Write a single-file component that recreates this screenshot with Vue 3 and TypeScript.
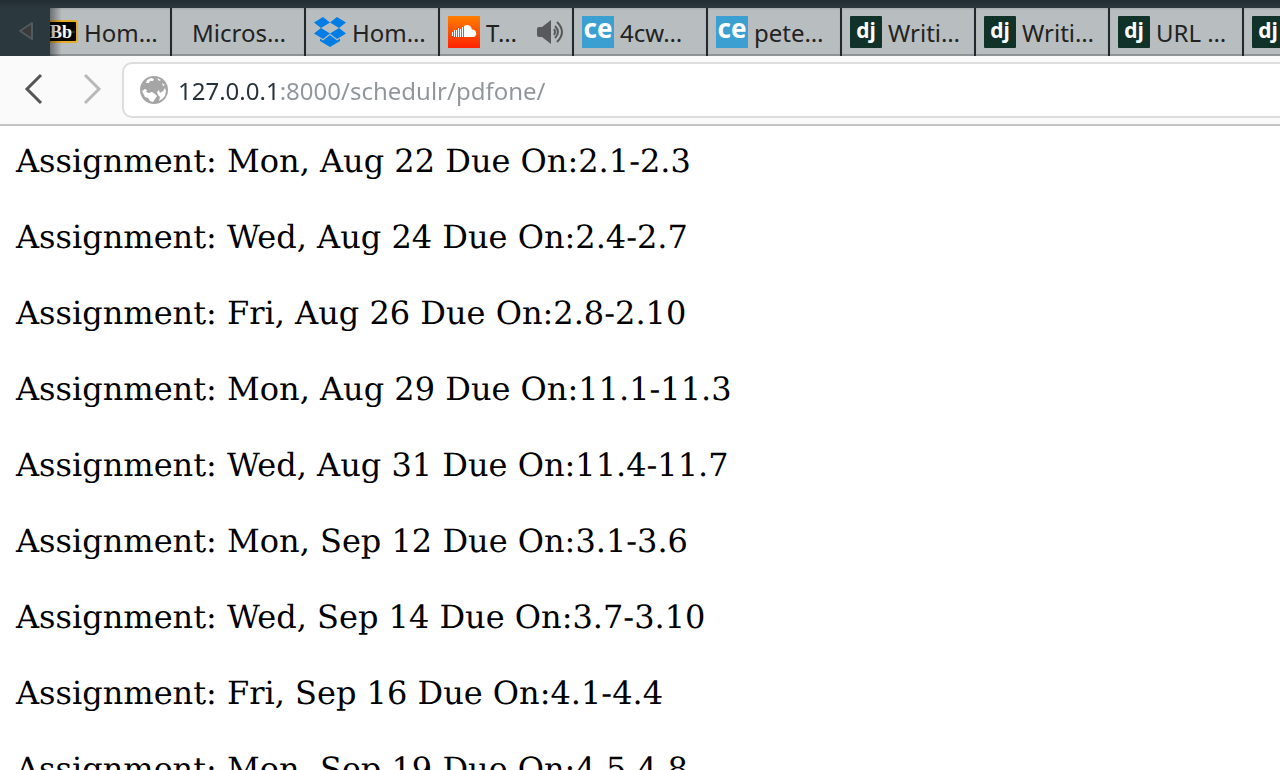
<script setup lang="ts">
import { ref } from 'vue'

type Icon = 'blackboard' | 'none' | 'dropbox' | 'soundcloud' | 'ce' | 'django'

interface Tab {
  id: number
  icon: Icon
  title: string
  audible?: boolean
}

const tabs: Tab[] = [
  { id: 1, icon: 'blackboard', title: 'Hom…' },
  { id: 2, icon: 'none', title: 'Micros…' },
  { id: 3, icon: 'dropbox', title: 'Hom…' },
  { id: 4, icon: 'soundcloud', title: 'T…', audible: true },
  { id: 5, icon: 'ce', title: '4cw…' },
  { id: 6, icon: 'ce', title: 'pete…' },
  { id: 7, icon: 'django', title: 'Writi…' },
  { id: 8, icon: 'django', title: 'Writi…' },
  { id: 9, icon: 'django', title: 'URL …' },
  { id: 10, icon: 'django', title: '' },
]

const address = ref('127.0.0.1:8000/schedulr/pdfone/')

const assignments = [
  { day: 'Mon, Aug 22', sections: '2.1-2.3' },
  { day: 'Wed, Aug 24', sections: '2.4-2.7' },
  { day: 'Fri, Aug 26', sections: '2.8-2.10' },
  { day: 'Mon, Aug 29', sections: '11.1-11.3' },
  { day: 'Wed, Aug 31', sections: '11.4-11.7' },
  { day: 'Mon, Sep 12', sections: '3.1-3.6' },
  { day: 'Wed, Sep 14', sections: '3.7-3.10' },
  { day: 'Fri, Sep 16', sections: '4.1-4.4' },
  { day: 'Mon, Sep 19', sections: '4.5-4.8' },
]
</script>

<template>
  <div class="browser">
    <nav class="tabstrip" aria-label="Tabs">
      <button class="scroll" type="button" aria-label="Scroll tabs left">
        <svg width="20" height="24" viewBox="0 0 20 24">
          <path d="M16 4V20L4 12Z" fill="#3a3a3a" stroke="#505a5f" stroke-width="2" stroke-linejoin="round" />
        </svg>
      </button>
      <div class="tabs">
        <button v-for="tab in tabs" :key="tab.id" type="button" class="tab" :class="{ plain: tab.icon === 'none' }">
          <svg v-if="tab.icon === 'blackboard'" class="icon" viewBox="0 0 32 32">
            <rect x="1" y="5" width="30" height="21" rx="2" fill="#050505" stroke="#e5ac27" stroke-width="2" />
            <path d="M3 16H29" stroke="#555" />
            <text x="15" y="22" text-anchor="middle" class="bb">Bb</text>
          </svg>
          <svg v-else-if="tab.icon === 'dropbox'" class="icon" viewBox="0 0 32 32" fill="#007ee5">
            <path d="M9 1L16 6.500L7 12L0 6.500ZM23 1L32 6.500L25 12L16 6.500ZM7 12L16 17.500L9 23L0 17.500ZM25 12L32 17.500L23 23L16 17.500ZM16 19L23 24.500L26 22.500V25L16 31L6 25V22.500L9 24.500Z" />
          </svg>
          <svg v-else-if="tab.icon === 'soundcloud'" class="icon" viewBox="0 0 32 32">
            <defs>
              <linearGradient id="flame" x1="0" y1="0" x2="0" y2="1">
                <stop offset="0" stop-color="#ff7f00" />
                <stop offset="1" stop-color="#ff2200" />
              </linearGradient>
            </defs>
            <rect width="32" height="32" fill="url(#flame)" />
            <path d="M4.500 16V20M6.500 14V21M8.500 14V21M10.500 12V21M12.500 13V21M14.500 11V21" stroke="#fff" />
            <path d="M16 10C19 8 23 9 24 13.500C29 13 30 21 25 21H16Z" fill="#fff" />
          </svg>
          <svg v-else-if="tab.icon === 'ce'" class="icon" viewBox="0 0 32 32">
            <rect width="32" height="32" fill="#3c9fd2" />
            <text x="16" y="22" text-anchor="middle" class="ce">ce</text>
          </svg>
          <svg v-else-if="tab.icon === 'django'" class="icon" viewBox="0 0 32 32">
            <rect width="32" height="32" rx="1" fill="#113228" />
            <text x="16" y="22" text-anchor="middle" class="dj">dj</text>
          </svg>
          <span class="title">{{ tab.title }}</span>
          <svg v-if="tab.audible" class="sound" viewBox="0 0 28 24">
            <path d="M1 9Q1 7 3 7H6L15 0V24L6 17H3Q1 17 1 15Z" fill="#58595a" />
            <path d="M18 9Q20 12 18 15M19 6Q25 12 19 18M21 2Q31 12 21 22" fill="none" stroke="#58595a" stroke-width="2" />
          </svg>
        </button>
      </div>
    </nav>

    <header class="toolbar">
      <button class="history back" type="button" aria-label="Back">
        <svg width="20" height="32" viewBox="0 0 20 32"><path d="M17 2L3 16L17 30" /></svg>
      </button>
      <button class="history forward" type="button" aria-label="Forward">
        <svg width="20" height="32" viewBox="0 0 20 32"><path d="M3 2L17 16L3 30" /></svg>
      </button>
      <div class="field">
        <svg class="globe" viewBox="0 0 28 28">
          <circle cx="14" cy="14" r="14" fill="#a5a5a5" />
          <path d="M7 4L11 2L14 3L13 5L10 5L9 7L6 7ZM17 2L21 4L19 5ZM2 15L5 13L7 14L6 16L9 17L12 16L15 18L17 20L15 23L13 26L10 25L8 22L5 21ZM17 16L19 14L20 17L23 15L25 12L26 15L25 20L22 23L19 25L20 21L18 19ZM22 7L25 9L23 10Z" fill="#fff" />
        </svg>
        <input v-model="address" class="address" type="text" aria-label="Address" spellcheck="false" />
      </div>
    </header>

    <main class="page">
      <p v-for="item in assignments" :key="item.day" class="assignment">Assignment: {{ item.day }} Due On:{{ item.sections }}</p>
    </main>
  </div>
</template>

<style>
body {
  margin: 0;
  background: #fff;
}
</style>

<style scoped>
.browser {
  display: flex;
  flex-direction: column;
  height: 100vh;
  overflow: hidden;
  font-family: "Noto Sans", sans-serif;
  font-size: 24px;
}

button {
  border: 0;
  padding: 0;
  background: none;
  font: inherit;
}

.tabstrip {
  display: flex;
  flex: none;
  height: 48px;
  padding-top: 8px;
  background: linear-gradient(#222c32, #2b383e 8px, #2b383e);
}

.scroll {
  display: flex;
  flex: none;
  align-items: center;
  justify-content: center;
  width: 50px;
  padding: 0 0 2px 2px;
}

.tabs {
  position: relative;
  display: flex;
  flex: 1;
  gap: 2px;
  min-width: 0;
  overflow: hidden;
  background: #20292e;
}

.tabs::before {
  content: "";
  position: absolute;
  z-index: 1;
  inset: 0 auto 0 0;
  width: 12px;
  background: linear-gradient(90deg, rgba(0, 0, 0, 0.4), transparent);
}

.tab {
  display: flex;
  flex: none;
  align-items: center;
  gap: 6px;
  width: 132px;
  padding: 2px 8px 0;
  background: #b8bdc0;
  border-bottom: 2px solid #8f9496;
  box-shadow: inset 0 1px 2px #a3a8ab;
  color: #222;
  line-height: 32px;
  text-align: left;
}

.tab:first-child {
  margin-left: -12px;
}

.tab.plain {
  padding-left: 20px;
}

.icon {
  flex: none;
  width: 32px;
  height: 32px;
  overflow: visible;
}

.title {
  flex: 1;
  padding-top: 2px;
  white-space: nowrap;
}

.sound {
  flex: none;
  width: 28px;
  height: 24px;
}

.bb {
  fill: #fff;
  font: bold 18px "Liberation Serif", serif;
}

.ce {
  fill: #fff;
  font: bold 26px "Noto Sans", sans-serif;
}

.dj {
  fill: #fff;
  font: bold 21px "Open Sans", sans-serif;
}

.toolbar {
  display: flex;
  flex: none;
  align-items: center;
  height: 68px;
  padding-left: 24px;
  background: #fafafa;
  border-bottom: 2px solid #c4c4c4;
}

.history {
  display: flex;
  flex: none;
  margin-right: 38px;
  padding-bottom: 2px;
}

.forward {
  margin-right: 20px;
}

.history path {
  fill: none;
  stroke: #555;
  stroke-width: 3;
}

.forward path {
  stroke: #b9b9b9;
}

.field {
  display: flex;
  flex: 1;
  align-items: center;
  gap: 10px;
  height: 52px;
  padding-left: 16px;
  background: #fff;
  border: 2px solid #ddd;
  border-right: 0;
  border-radius: 10px 0 0 10px;
}

.globe {
  flex: none;
  width: 28px;
  height: 28px;
}

.address {
  flex: 1;
  min-width: 0;
  height: 36px;
  border: 0;
  padding: 0;
  outline: 0;
  font: inherit;
  /* host in dark, port and path in grey */
  background: linear-gradient(90deg, #263238 101px, #8f969a 101px);
  background-clip: text;
  color: transparent;
  caret-color: #263238;
}

.page {
  flex: 1;
  min-height: 0;
  padding: 16px;
  overflow: hidden;
  background: #fff;
  color: #000;
  font-family: "DejaVu Serif", serif;
  font-size: 32px;
  line-height: 38px;
  text-rendering: geometricPrecision;
}

.assignment {
  margin: 0 0 38px;
}
</style>
